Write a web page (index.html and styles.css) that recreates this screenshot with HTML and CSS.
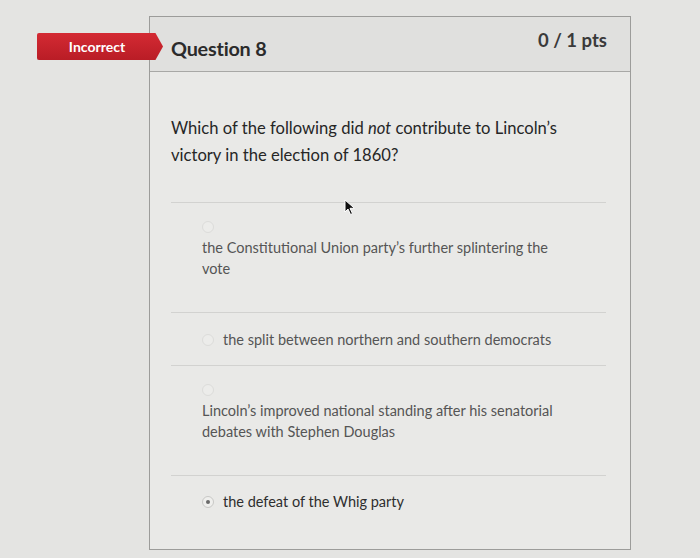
FILE: index.html
```html
<!DOCTYPE html>
<html lang="en">
<head>
    <meta charset="UTF-8">
    <meta name="viewport" content="width=device-width, initial-scale=1.0">
    <title>Question 8</title>
    <link rel="stylesheet" href="styles.css">
</head>
<body>

    <div class="page">
        <div class="badge-col">
            <div class="badge">Incorrect</div>
        </div>

        <div class="question">
            <div class="question-header">
                <h2>Question 8</h2>
                <span class="pts">0 / 1 pts</span>
            </div>

            <div class="question-body">
                <p class="question-text">Which of the following did <em>not</em> contribute to Lincoln’s victory in the election of 1860?</p>

                <div class="answers">
                    <!-- cursor from the photo -->
                    <svg class="cursor" width="12" height="17" viewBox="0 0 12 17">
                        <path d="M1 1 L1 13 L4 10 L6.5 15.5 L8.5 14.6 L6 9.3 L10.5 9.3 Z" fill="#111" stroke="#fff" stroke-width="1"/>
                    </svg>

                    <div class="answer long">
                        <span class="radio"></span>
                        <span class="label">the Constitutional Union party’s further splintering the vote</span>
                    </div>
                    <div class="answer">
                        <span class="radio"></span>
                        <span class="label">the split between northern and southern democrats</span>
                    </div>
                    <div class="answer long">
                        <span class="radio"></span>
                        <span class="label">Lincoln’s improved national standing after his senatorial debates with Stephen Douglas</span>
                    </div>
                    <div class="answer selected">
                        <span class="radio"></span>
                        <span class="label">the defeat of the Whig party</span>
                    </div>
                </div>
            </div>
        </div>
    </div>

</body>
</html>
```

FILE: styles.css
```css
body {
    margin: 0;
    font-family: Lato, "Open Sans", Arial, sans-serif;
    background: #e4e4e2;
    color: #2d3b45;
}

.page {
    display: flex;
    padding-top: 16px;
}

.badge-col {
    width: 149px;
    flex-shrink: 0;
    position: relative;
    z-index: 2;
}

.badge {
    margin: 17px -14px 0 37px;
    height: 27px;
    line-height: 27px;
    padding-right: 6px;
    background: linear-gradient(#d42a33, #b91d26);
    color: #fff;
    font-size: 14px;
    font-weight: 700;
    text-align: center;
    clip-path: polygon(0 0, 94% 0, 100% 50%, 94% 100%, 0 100%);
    border-radius: 2px 0 0 2px;
    box-shadow: 0 1px 2px rgba(0, 0, 0, 0.2);
}

.question {
    width: 480px;
    height: 532px;
    border: 1px solid #9c9c9a;
    background: #e9e9e7;
    display: flex;
    flex-direction: column;
}

.question-header {
    height: 54px;
    background: #e0e0de;
    border-bottom: 1px solid #a8a8a6;
    display: flex;
    justify-content: space-between;
    align-items: center;
    padding: 0 23px 0 21px;
}

.question-header h2 {
    margin: 8px 0 0;
    font-size: 19.8px;
    font-weight: 700;
    color: #2b2b2b;
    letter-spacing: -0.2px;
}

.pts {
    font-size: 18.5px;
    font-weight: 700;
    color: #3a3a3a;
    margin-top: -8px;
}

.question-body {
    padding: 43px 24px 0 21px;
}

.question-text {
    margin: 0;
    font-size: 16.6px;
    line-height: 27px;
    color: #262626;
    padding-right: 30px;
}

.answers {
    position: relative;
    margin-top: 33px;
}

.cursor {
    position: absolute;
    left: 173px;
    top: -3px;
}

.answer {
    border-top: 1px solid #d2d2d0;
    padding: 16px 0 15px 31px;
    font-size: 14.5px;
    line-height: 21px;
    color: #555;
    display: flex;
    align-items: center;
    gap: 9px;
}

.answer.long {
    display: block;
    padding-bottom: 33px;
    padding-right: 40px;
}

.answer.long .radio {
    display: block;
    margin: 2px 0 4px;
}

.answer.selected {
    color: #2e2e2e;
    padding-top: 15px;
}

.radio {
    width: 10px;
    height: 10px;
    border: 1px solid #dcdcda;
    border-radius: 50%;
    background: #ececea;
    flex-shrink: 0;
    position: relative;
}

.selected .radio {
    border-color: #c8c8c6;
    background: #efefed;
}

.selected .radio::after {
    content: "";
    position: absolute;
    left: 3px;
    top: 3px;
    width: 4px;
    height: 4px;
    border-radius: 50%;
    background: #6a6a6a;
}
```
